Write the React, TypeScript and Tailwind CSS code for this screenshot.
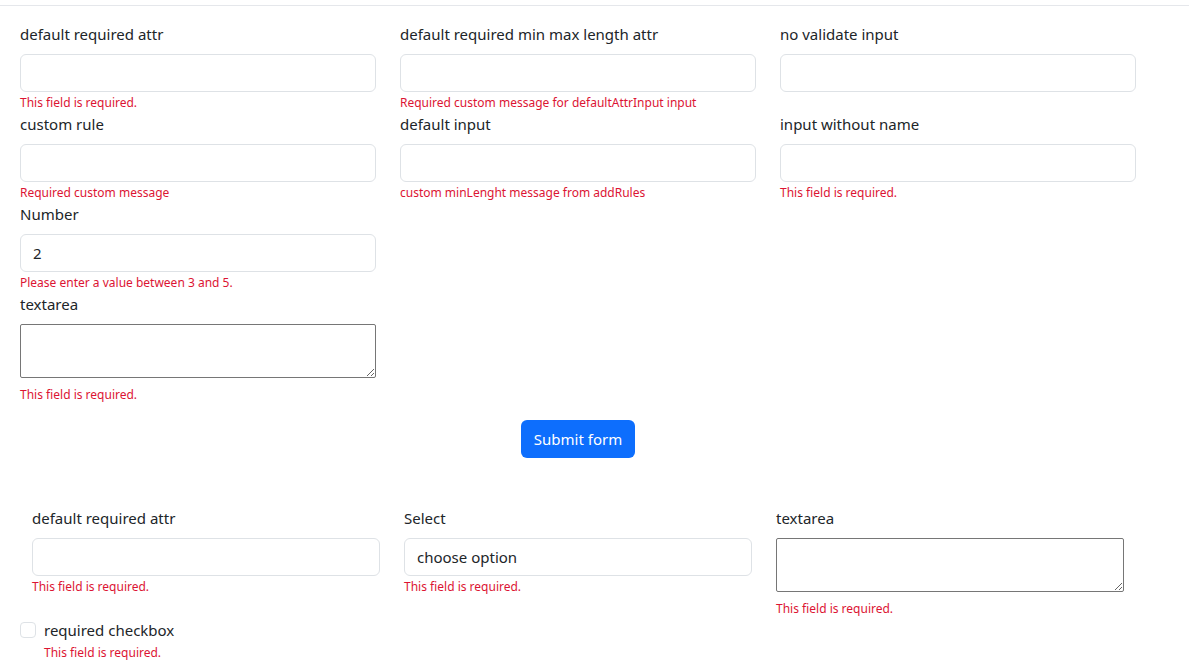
import React from "react";

const font = { fontFamily: '"Noto Sans", "Open Sans", sans-serif' };

function Err({ text }: { text?: string }) {
  return (
    <div className="h-[20px] pt-px text-[12px] leading-[19px] text-[#dc1433]">{text ?? ""}</div>
  );
}

function Field({ label, error, value }: { label: string; error?: string; value?: string }) {
  return (
    <div className="flex flex-col">
      <label className="mb-2 text-[15px] leading-[24px] text-[#212529]">{label}</label>
      <input
        readOnly
        value={value ?? ""}
        className="h-[38px] w-full rounded-[6px] border border-[#dee2e6] bg-white px-3 text-[15px] text-[#212529] outline-none"
      />
      <Err text={error} />
    </div>
  );
}

function TextareaField({ label, error }: { label: string; error?: string }) {
  return (
    <div className="flex flex-col">
      <label className="mb-2 text-[15px] leading-[24px] text-[#212529]">{label}</label>
      <textarea
        readOnly
        className="block h-[54px] w-full resize-y rounded-[2px] border border-[#767676] bg-white outline-none"
      />
      <div className="mt-[6px]">
        <Err text={error} />
      </div>
    </div>
  );
}

export default function App() {
  return (
    <div className="min-h-[666px] w-full bg-white" style={font}>
      <div className="h-[6px] border-b border-[#e5e7eb]" />
      <div className="ml-5 w-[1116px] pt-4">
        <div className="grid grid-cols-3 gap-x-6">
          <Field label="default required attr" error="This field is required." />
          <Field
            label="default required min max length attr"
            error="Required custom message for defaultAttrInput input"
          />
          <Field label="no validate input" />
          <Field label="custom rule" error="Required custom message" />
          <Field label="default input" error="custom minLenght message from addRules" />
          <Field label="input without name" error="This field is required." />
          <Field label="Number" value="2" error="Please enter a value between 3 and 5." />
          <div />
          <div />
          <TextareaField label="textarea" error="This field is required." />
        </div>
        <div className="mt-4 flex justify-center">
          <button className="h-[38px] w-[114px] rounded-[6px] bg-[#0d6efd] text-[15px] text-white">
            Submit form
          </button>
        </div>

        <div className="mt-12">
          <div className="grid grid-cols-3 gap-x-6 px-3">
            <Field label="default required attr" error="This field is required." />
            <Field label="Select" value="choose option" error="This field is required." />
            <TextareaField label="textarea" error="This field is required." />
          </div>
          <div className="flex h-[24px] items-center gap-2">
            <span className="h-4 w-4 rounded-[4px] border border-[#dee2e6] bg-white" />
            <span className="text-[15px] leading-[24px] text-[#212529]">required checkbox</span>
          </div>
          <div className="pl-6">
            <Err text="This field is required." />
          </div>
        </div>
      </div>
    </div>
  );
}
